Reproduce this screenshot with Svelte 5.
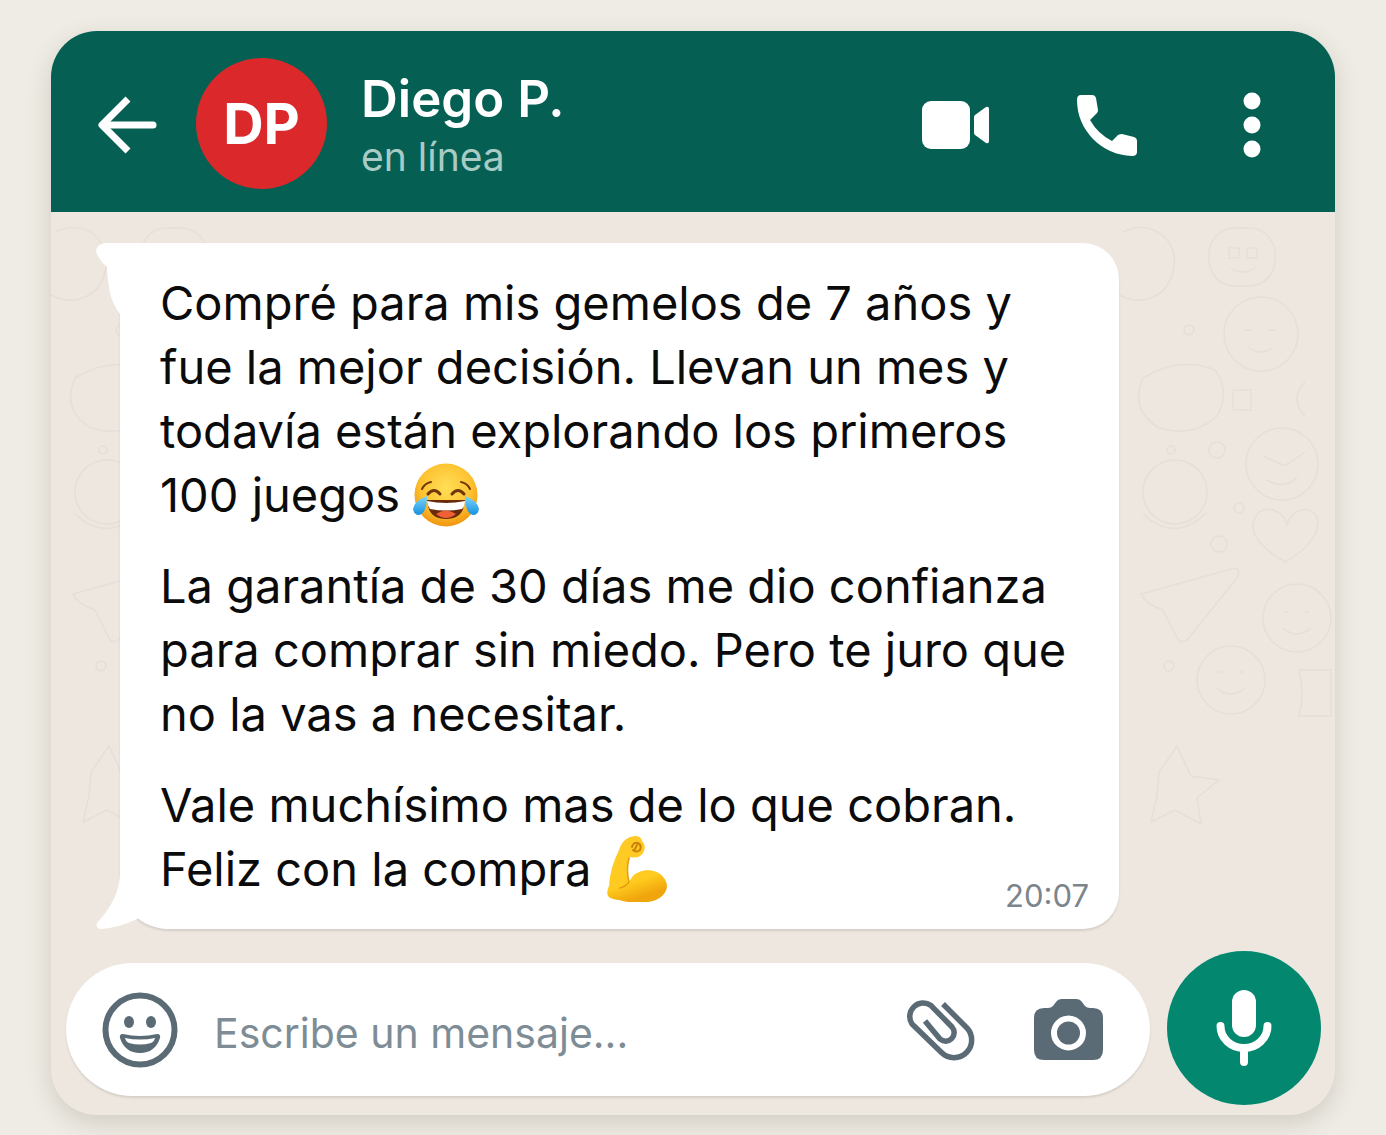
<script lang="ts">
  type Emoji = "joy" | "muscle"

  interface Paragraph {
    lines: string[]
    emoji?: Emoji
  }

  const contact = { name: "Diego P.", initials: "DP", status: "en línea" }

  const paragraphs: Paragraph[] = [
    {
      lines: [
        "Compré para mis gemelos de 7 años y",
        "fue la mejor decisión. Llevan un mes y",
        "todavía están explorando los primeros",
        "100 juegos",
      ],
      emoji: "joy",
    },
    {
      lines: [
        "La garantía de 30 días me dio confianza",
        "para comprar sin miedo. Pero te juro que",
        "no la vas a necesitar.",
      ],
    },
    {
      lines: ["Vale muchísimo mas de lo que cobran.", "Feliz con la compra"],
      emoji: "muscle",
    },
  ]

  let draft: string = $state("")
</script>

{#snippet doodles()}
  <g fill="none" stroke="#dcd6cf" stroke-width="1.5">
    <path d="M24 20q20-10 38 2q18 14 12 38q-6 24-30 28q-20 2-34-14" />
    <rect x="110" y="16" width="66" height="58" rx="26" />
    <path d="M130 36h10v10h-10zM148 36h10v10h-10zM132 56q12 8 24 0" />
    <circle cx="162" cy="122" r="37" />
    <path d="M146 118h8M170 118h8M150 136q12 8 24 0" />
    <path d="M44 166q36-22 72-8q16 22 2 46q-24 22-58 12q-30-18-16-50z" />
    <path d="M134 178h18v20h-18zM206 170q-16 16 0 34" />
    <circle cx="183" cy="252" r="36" />
    <path d="M164 244l22 10l20-14M168 268q16 10 30-2" />
    <circle cx="76" cy="280" r="32" />
    <path d="M44 302q32 30 64-2" />
    <path d="M186 350q-34-20-32-38q4-18 20-14q12 4 14 14q6-16 22-14q14 6 6 24q-8 16-30 28z" />
    <path d="M42 382l94-26q6 2 2 10l-50 62q-6 4-10-2l-14-28q-18-6-22-16z" />
    <circle cx="198" cy="406" r="34" />
    <path d="M186 400h4M206 400h4M184 416q14 12 28 0" />
    <circle cx="132" cy="468" r="34" />
    <path d="M120 460h4M140 460h4M118 476q14 12 28 0" />
    <path d="M200 458h32v46h-32q6-22 0-46z" />
    <path d="M60 560l18-26l14 30l28 4l-22 18l4 26l-26-14l-24 12l6-26z" />
    <circle cx="90" cy="118" r="5" /><circle cx="118" cy="238" r="8" /><circle cx="140" cy="296" r="5" />
    <circle cx="120" cy="332" r="8" /><circle cx="72" cy="238" r="4" /><circle cx="70" cy="454" r="5" />
  </g>
{/snippet}

{#snippet joy()}
  <svg class="emoji" viewBox="0 0 66 66" role="img" aria-label="cara llorando de risa">
    <defs>
      <radialGradient id="face" cx="50%" cy="38%" r="62%">
        <stop offset="0" stop-color="#ffdf57" />
        <stop offset="0.65" stop-color="#fdc230" />
        <stop offset="1" stop-color="#f0950f" />
      </radialGradient>
      <linearGradient id="tear" x1="0" y1="0" x2="0" y2="1">
        <stop offset="0" stop-color="#7fd6fb" />
        <stop offset="1" stop-color="#1590e0" />
      </linearGradient>
    </defs>
    <circle cx="33" cy="33" r="31.5" fill="url(#face)" />
    <path d="M14 38h38q-1 19-19 19t-19-19z" fill="#6b2b0b" />
    <path d="M14 39q19 4 38 0q0 5-3 8q-16 3-32 0q-3-4-3-8z" fill="#fff" />
    <path d="M23 52q10-7 20 0q-10 8-20 0z" fill="#ef6035" />
    <g fill="none" stroke="#70380a" stroke-width="3" stroke-linecap="round">
      <path d="M15 32q6-7 12 0M39 32q6-7 12 0" />
      <path d="M9 27q3-6 9-7M57 27q-3-6-9-7" stroke-width="2" />
    </g>
    <path d="M14 34q-13 5-14 13q1 6 6 6q8-2 8-19zM52 34q13 5 14 13q-1 6-6 6q-8-2-8-19z" fill="url(#tear)" />
  </svg>
{/snippet}

{#snippet muscle()}
  <svg class="emoji" viewBox="0 0 66 66" role="img" aria-label="bíceps flexionado">
    <defs>
      <linearGradient id="skin" x1="0" y1="0" x2="0.3" y2="1">
        <stop offset="0" stop-color="#ffc928" />
        <stop offset="0.75" stop-color="#ffcb1f" />
        <stop offset="1" stop-color="#f0a50c" />
      </linearGradient>
    </defs>
    <path
      d="M14 14Q18 1 30 0Q36 0 37 5Q42 10 38 17Q34 23 25 21Q21 32 24 46Q29 35 42 34Q59 35 62 49Q62 60 48 65Q32 69 14 64Q5 63 3 60Q1 56 4 50Q5 32 14 14Z"
      fill="url(#skin)"
    />
    <path d="M27 11q1-5 6-4q4 2 2 7q-4 3-7 0M32 9l-2 4" fill="none" stroke="#c9820b" stroke-width="2" stroke-linecap="round" />
    <path d="M24 22q-3 11 0 24q-4 5-9 6" fill="none" stroke="#e39d10" stroke-width="1.5" stroke-linecap="round" />
  </svg>
{/snippet}

<main class="chat">
  <header>
    <button type="button" class="back" aria-label="Atrás">
      <svg width="60" height="60" viewBox="0 0 60 60" fill="none" stroke="#fff" stroke-width="7" stroke-linejoin="round">
        <path d="M31 4L5 30L31 56" />
        <path d="M6 30H56" stroke-linecap="round" />
      </svg>
    </button>
    <div class="avatar">{contact.initials}</div>
    <div class="who">
      <h1>{contact.name}</h1>
      <p>{contact.status}</p>
    </div>
    <nav>
      <button type="button" aria-label="Videollamada">
        <svg width="80" height="80" viewBox="0 0 80 80" fill="#fff">
          <rect x="6" y="16" width="48" height="48" rx="9" />
          <path d="M59 30L70 22q3-1 3 2V56q0 3-3 2L59 50q-1-1-1-2V32q0-1 1-2z" />
        </svg>
      </button>
      <button type="button" aria-label="Llamar">
        <svg width="80" height="80" viewBox="0 0 80 80" fill="#fff">
          <path d="M17 10H28Q31 10 32 13L34 25Q34 27 33 28L26 35Q34 49 48 56L54 50Q56 49 58 49L70 52Q73 53 73 56V67Q73 71 68 71Q45 70 29 54Q13 37 13 15Q13 10 17 10Z" />
        </svg>
      </button>
      <button type="button" aria-label="Más opciones">
        <svg width="80" height="80" viewBox="0 0 80 80" fill="#fff">
          <circle cx="40" cy="16" r="8.5" />
          <circle cx="40" cy="40" r="8.5" />
          <circle cx="40" cy="64" r="8.5" />
        </svg>
      </button>
    </nav>
  </header>

  <section class="thread">
    <svg class="doodles left" width="236" height="720" viewBox="0 0 236 720" aria-hidden="true">{@render doodles()}</svg>
    <svg class="doodles right" width="236" height="720" viewBox="0 0 236 720" aria-hidden="true">{@render doodles()}</svg>

    <article class="bubble">
      <svg class="tail top" width="26" height="74" viewBox="0 0 26 74" fill="#fff" aria-hidden="true">
        <path d="M26 0H9Q1 1 0 8Q2 16 11 24Q11 32 14 50Q17 62 24 71L26 74Z" />
      </svg>
      <svg class="tail bottom" width="62" height="56" viewBox="0 0 62 56" fill="#fff" aria-hidden="true">
        <path d="M24 0Q24 25 1 50Q-1 55 5 56Q22 55 41 46L62 30V0Z" />
      </svg>

      {#each paragraphs as paragraph}
        <p>
          {#each paragraph.lines as line, i}
            {#if i > 0}<br />{/if}
            {line}
          {/each}
          {#if paragraph.emoji === "joy"}
            {@render joy()}
          {:else if paragraph.emoji === "muscle"}
            {@render muscle()}
          {/if}
        </p>
      {/each}
      <time datetime="20:07">20:07</time>
    </article>

    <form class="composer" onsubmit={(e) => e.preventDefault()}>
      <div class="field">
        <button type="button" aria-label="Emojis">
          <svg width="76" height="76" viewBox="0 0 76 76" fill="#5b6b75">
            <circle cx="38" cy="38" r="34.5" fill="none" stroke="#5b6b75" stroke-width="6" />
            <ellipse cx="27" cy="30" rx="5" ry="6" />
            <ellipse cx="49" cy="30" rx="5" ry="6" />
            <path d="M21 42q17 4 34 0q4 0 3 4q-5 15-20 15t-20-15q-1-4 3-4zM23 46q1 4 4 5q11 3 22 0q3-1 4-5q-15 3-30 0z" fill-rule="evenodd" />
          </svg>
        </button>
        <input type="text" aria-label="Mensaje" placeholder="Escribe un mensaje..." bind:value={draft} />
        <button type="button" aria-label="Adjuntar">
          <svg width="80" height="80" viewBox="0 0 80 80" fill="none" stroke="#5b6b75" stroke-width="5.5">
            <path d="M47 14L70.500 37.500A17.500 17.500 0 0 1 45.500 62.500L16 34A13.500 13.500 0 0 1 35 15.500L56 37A8.500 8.500 0 0 1 44 49L29 31" />
          </svg>
        </button>
        <button type="button" class="camera" aria-label="Cámara">
          <svg width="70" height="62" viewBox="0 0 70 62">
            <path d="M10 9H14Q17 9 19 7L22 3Q24 0 28 0H42Q46 0 48 3L51 7Q53 9 56 9H59Q69 9 69 19V51Q69 61 59 61H10Q0 61 0 51V19Q0 9 10 9Z" fill="#5b6b75" />
            <circle cx="34.500" cy="34" r="14.500" fill="none" stroke="#fff" stroke-width="6" />
          </svg>
        </button>
      </div>
      <button type="button" class="mic" aria-label="Grabar mensaje de voz">
        <svg width="56" height="80" viewBox="0 0 56 80" fill="none" stroke="#fff" stroke-width="8" stroke-linecap="round">
          <rect x="16" y="2" width="24" height="47" rx="12" fill="#fff" stroke="none" />
          <path d="M4.500 38A23.500 22 0 0 0 51.500 38M28 61V74" />
        </svg>
      </button>
    </form>
  </section>
</main>

<style>
  :global(body) {
    margin: 0;
    background: #efece5;
  }

  .chat {
    margin: 31px 51px 20px;
    border-radius: 46px;
    overflow: hidden;
    background: #eee7e0;
    box-shadow: 0 8px 24px rgba(90, 80, 65, 0.2);
    font-family: Inter, "Liberation Sans", sans-serif;
  }

  button {
    display: flex;
    flex: none;
    padding: 0;
    border: 0;
    background: none;
    cursor: pointer;
  }

  header {
    display: flex;
    align-items: center;
    box-sizing: border-box;
    height: 181px;
    padding: 0 43px 0 46px;
    background: #056053;
    color: #fff;
  }

  .back {
    padding-top: 6px;
  }

  .avatar {
    display: flex;
    flex: none;
    align-items: center;
    justify-content: center;
    width: 131px;
    height: 131px;
    margin: 4px 34px 0 39px;
    border-radius: 50%;
    background: #db282b;
    font-size: 56px;
    font-weight: 700;
  }

  .who {
    flex: 1;
    padding-top: 7px;

    h1 {
      margin: 0;
      font-size: 51px;
      line-height: 64px;
      font-weight: 600;
    }

    p {
      margin: 0;
      font-size: 39px;
      line-height: 52px;
      color: #a9cbc5;
    }
  }

  nav {
    display: flex;
    gap: 68px;
    padding-top: 7px;
  }

  .thread {
    position: relative;
    padding: 31px 14px 10px 15px;
  }

  .doodles {
    position: absolute;
    top: 0;
    opacity: 0.45;
  }

  .doodles.left {
    left: -20px;
  }

  .doodles.right {
    right: 0;
  }

  .bubble {
    position: relative;
    margin: 0 202px 22px 54px;
    padding: 28px 30px 28px 40px;
    border-radius: 0 36px 36px 48px;
    background: #fff;
    box-shadow: 0 2px 2px rgba(90, 80, 65, 0.15);
    color: #0b0b0c;

    p {
      margin: 0 0 27px;
      font-size: 47px;
      line-height: 64px;
    }

    p:last-of-type {
      margin-bottom: 0;
    }

    time {
      position: absolute;
      right: 30px;
      bottom: 12px;
      font-size: 31px;
      line-height: 42px;
      color: #7b858b;
    }
  }

  .tail {
    position: absolute;
    left: -24px;
  }

  .tail.top {
    top: 0;
  }

  .tail.bottom {
    bottom: 0;
  }

  .emoji {
    width: 66px;
    height: 66px;
    margin: -12px 0 -4px;
    vertical-align: middle;
  }

  .composer {
    position: relative;
    display: flex;
    align-items: center;
    gap: 17px;
  }

  .field {
    display: flex;
    flex: 1;
    align-items: center;
    box-sizing: border-box;
    min-width: 0;
    height: 133px;
    margin-top: 2px;
    padding: 2px 46px 0 36px;
    border-radius: 67px;
    background: #fff;
    box-shadow: 0 2px 2px rgba(90, 80, 65, 0.15);
  }

  input {
    flex: 1;
    min-width: 0;
    padding: 6px 0 0;
    margin: 0 8px 0 36px;
    border: 0;
    outline: 0;
    background: none;
    font: inherit;
    font-size: 41px;
    color: #0b0b0c;
  }

  input::placeholder {
    color: #7e8d95;
    opacity: 1;
  }

  .camera {
    margin-left: 58px;
  }

  .mic {
    align-items: center;
    justify-content: center;
    width: 154px;
    height: 154px;
    border-radius: 50%;
    background: #03876f;
  }
</style>
